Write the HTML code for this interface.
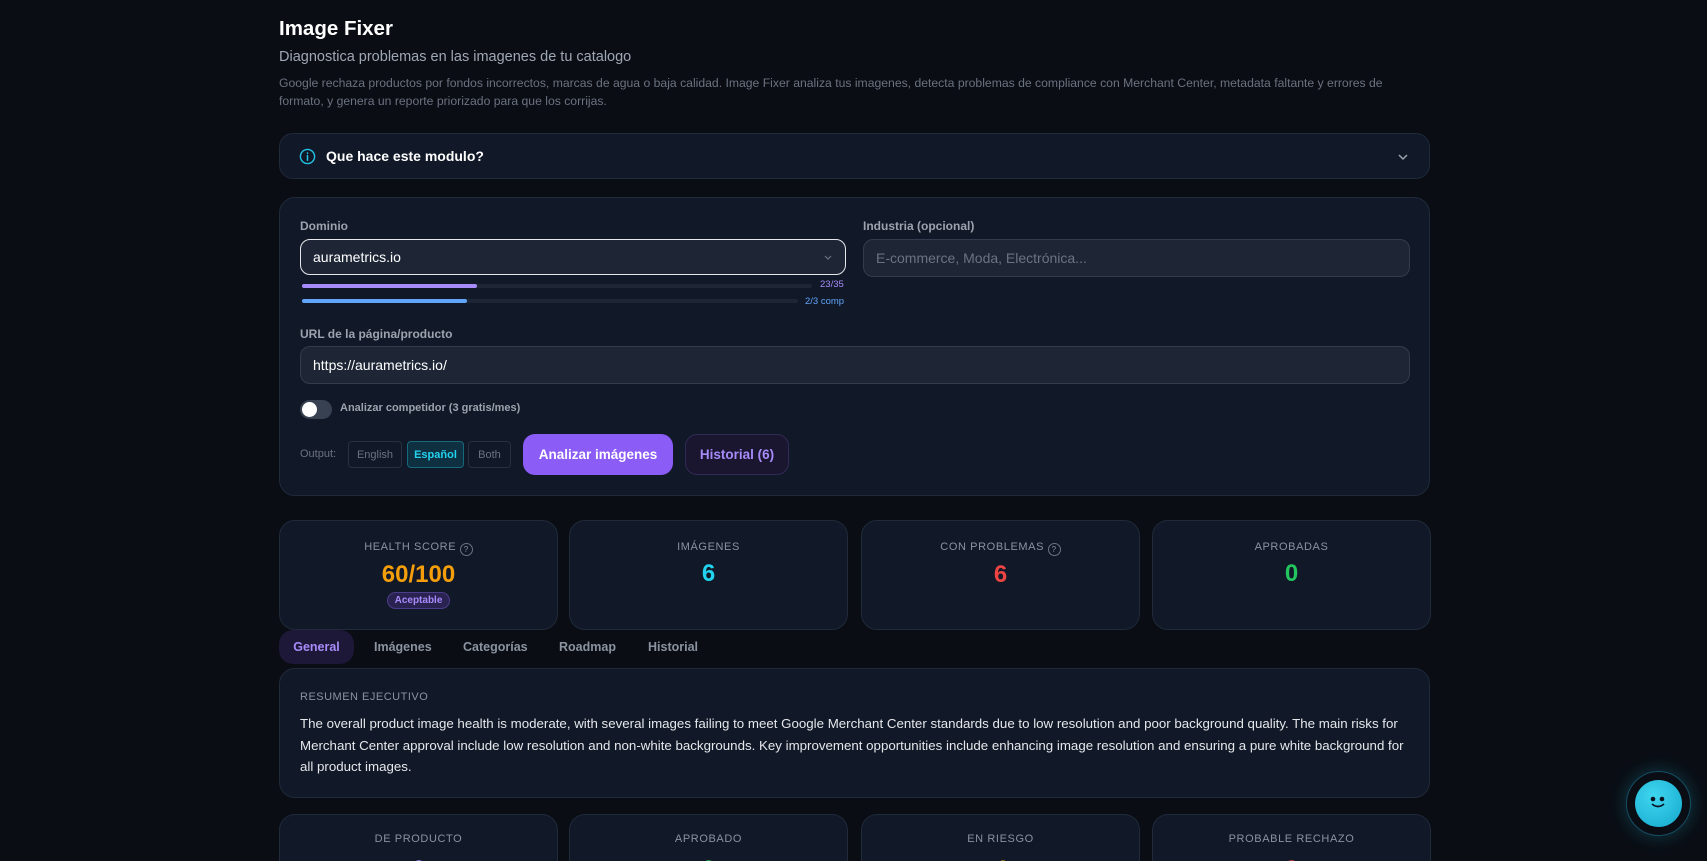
<!DOCTYPE html>
<html style="width:1707px;height:861px;overflow:hidden"><head><meta charset="utf-8"><style>
*{box-sizing:border-box;margin:0;padding:0}
body{width:1707px;height:861px;overflow:hidden;background:#0a0d14;font-family:"Liberation Sans",sans-serif;color:#e5e7eb;position:relative}
.a{position:absolute}
.card{position:absolute;background:#111827;border:1px solid #1f2a3a;border-radius:16px}
.lbl{font-size:12px;font-weight:bold;color:#9ca3af}
.inp{position:absolute;background:#1e2636;border:1px solid #323c4e;border-radius:10px;font-size:14px;padding-left:12px;display:flex;align-items:center}
.stat{position:absolute;top:520px;height:110px;width:279px;background:#111827;border:1px solid #1f2a3a;border-radius:16px;text-align:center;overflow:hidden}
.stat .t{font-size:11px;letter-spacing:.6px;color:#8b93a1;margin-top:20px}
.stat .v{font-size:24px;font-weight:bold;margin-top:7px}
.bs{height:47px;border-bottom:none;border-radius:16px 16px 0 0}
.ob{position:absolute;top:441px;height:27px;border:1px solid #263040;border-radius:4px;font-size:11px;color:#6b7280;display:flex;align-items:center;justify-content:center}
.tab{position:absolute;top:630px;height:34px;font-size:12.5px;font-weight:bold;color:#8b93a1;display:flex;align-items:center}
</style></head><body>
<div class="a" style="left:279px;top:17px;font-size:20.5px;font-weight:bold;color:#fff">Image Fixer</div>
<div class="a" style="left:279px;top:49px;font-size:14.5px;color:#a0a7b4">Diagnostica problemas en las imagenes de tu catalogo</div>
<div class="a" style="left:279px;top:74px;width:1125px;font-size:12.2px;line-height:18px;color:#6b7280">Google rechaza productos por fondos incorrectos, marcas de agua o baja calidad. Image Fixer analiza tus imagenes, detecta problemas de compliance con Merchant Center, metadata faltante y errores de formato, y genera un reporte priorizado para que los corrijas.</div>

<div class="card" style="left:279px;top:133px;width:1151px;height:46px;border-radius:14px">
<svg class="a" style="left:19px;top:14px" width="17" height="17" viewBox="0 0 18 18"><circle cx="9" cy="9" r="7.5" fill="none" stroke="#22c3e6" stroke-width="1.5"/><path d="M9 8v5M9 5.2v.3" stroke="#22c3e6" stroke-width="1.6" stroke-linecap="round"/></svg>
<div class="a" style="left:46px;top:14px;font-size:14px;font-weight:bold;color:#fff">Que hace este modulo?</div>
<svg class="a" style="left:1117px;top:18px" width="12" height="10" viewBox="0 0 12 10"><path d="M2 3l4 4 4-4" fill="none" stroke="#9ca3af" stroke-width="1.5"/></svg>
</div>

<div class="card" style="left:279px;top:197px;width:1151px;height:299px"></div>
<div class="a lbl" style="left:300px;top:219px">Dominio</div>
<div class="inp" style="left:300px;top:239px;width:546px;height:36px;border:1.5px solid #e5e7eb;color:#fff">aurametrics.io
<svg class="a" style="right:12px;top:14px" width="10" height="8" viewBox="0 0 10 8"><path d="M2 2l3 3 3-3" fill="none" stroke="#6b7280" stroke-width="1.2"/></svg></div>
<div class="a" style="left:302px;top:284px;width:510px;height:4px;background:#1e2636;border-radius:2px"><div style="width:175px;height:4px;background:#a78bfa;border-radius:2px"></div></div>
<div class="a" style="left:820px;top:279px;font-size:9.5px;color:#a78bfa">23/35</div>
<div class="a" style="left:302px;top:299px;width:496px;height:4px;background:#1e2636;border-radius:2px"><div style="width:165px;height:4px;background:#60a5fa;border-radius:2px"></div></div>
<div class="a" style="left:805px;top:296px;font-size:9.5px;color:#60a5fa">2/3 comp</div>
<div class="a lbl" style="left:863px;top:219px">Industria (opcional)</div>
<div class="inp" style="left:863px;top:239px;width:547px;height:38px;color:#6b7280">E-commerce, Moda, Electrónica...</div>
<div class="a lbl" style="left:300px;top:327px">URL de la página/producto</div>
<div class="inp" style="left:300px;top:346px;width:1110px;height:38px;color:#fff">https://aurametrics.io/</div>
<div class="a" style="left:300px;top:400px;width:32px;height:19px;background:#374151;border-radius:10px"><div style="position:absolute;left:2px;top:2px;width:15px;height:15px;background:#fff;border-radius:50%"></div></div>
<div class="a" style="left:340px;top:402px;font-size:11px;font-weight:bold;color:#9ca3af">Analizar competidor (3 gratis/mes)</div>
<div class="a" style="left:300px;top:448px;font-size:11px;color:#6b7280">Output:</div>
<div class="ob" style="left:348px;width:54px">English</div>
<div class="ob" style="left:407px;width:57px;background:#0e3040;border-color:#16697a;color:#22d3ee;font-weight:bold">Español</div>
<div class="ob" style="left:468px;width:43px">Both</div>
<div class="a" style="left:523px;top:434px;width:150px;height:41px;background:#8b5cf6;border-radius:12px;color:#fff;font-size:13.5px;font-weight:bold;display:flex;align-items:center;justify-content:center">Analizar imágenes</div>
<div class="a" style="left:685px;top:434px;width:104px;height:41px;background:#1a1630;border:1px solid #302a55;border-radius:12px;color:#a78bfa;font-size:13.5px;font-weight:bold;display:flex;align-items:center;justify-content:center">Historial (6)</div>

<div class="stat" style="left:279px"><div class="t">HEALTH SCORE <span style="display:inline-block;width:13px;height:13px;border:1px solid #6b7280;border-radius:50%;font-size:8px;line-height:11px;vertical-align:-2px">?</span></div><div class="v" style="color:#f59e0b;margin-top:5px">60/100</div><div style="display:inline-block;margin-top:3px;padding:2px 7px;font-size:10px;font-weight:bold;color:#a78bfa;background:#2a2250;border:1px solid #4c3d8a;border-radius:10px">Aceptable</div></div>
<div class="stat" style="left:569px"><div class="t">IMÁGENES</div><div class="v" style="color:#22d3ee">6</div></div>
<div class="stat" style="left:861px"><div class="t">CON PROBLEMAS <span style="display:inline-block;width:13px;height:13px;border:1px solid #6b7280;border-radius:50%;font-size:8px;line-height:11px;vertical-align:-2px">?</span></div><div class="v" style="color:#ef4444;margin-top:5px">6</div></div>
<div class="stat" style="left:1152px"><div class="t">APROBADAS</div><div class="v" style="color:#22c55e">0</div></div>

<div class="tab" style="left:279px;width:75px;justify-content:center;background:#1e1838;border-radius:14px;color:#a78bfa">General</div>
<div class="tab" style="left:374px">Imágenes</div>
<div class="tab" style="left:463px">Categorías</div>
<div class="tab" style="left:559px">Roadmap</div>
<div class="tab" style="left:648px">Historial</div>

<div class="card" style="left:279px;top:668px;width:1151px;height:130px"></div>
<div class="a" style="left:300px;top:691px;font-size:11px;letter-spacing:.5px;color:#8b93a1">RESUMEN EJECUTIVO</div>
<div class="a" style="left:300px;top:713px;width:1112px;font-size:13.3px;line-height:21.5px;color:#e5e7eb">The overall product image health is moderate, with several images failing to meet Google Merchant Center standards due to low resolution and poor background quality. The main risks for Merchant Center approval include low resolution and non-white backgrounds. Key improvement opportunities include enhancing image resolution and ensuring a pure white background for all product images.</div>

<div class="stat bs" style="left:279px;top:814px"><div class="t" style="margin-top:18px">DE PRODUCTO</div><div class="v" style="color:#a78bfa;margin-top:11px">6</div></div>
<div class="stat bs" style="left:569px;top:814px"><div class="t" style="margin-top:18px">APROBADO</div><div class="v" style="color:#22c55e;margin-top:11px">0</div></div>
<div class="stat bs" style="left:861px;top:814px"><div class="t" style="margin-top:18px">EN RIESGO</div><div class="v" style="color:#eab308;margin-top:11px">4</div></div>
<div class="stat bs" style="left:1152px;top:814px"><div class="t" style="margin-top:18px">PROBABLE RECHAZO</div><div class="v" style="color:#ef4444;margin-top:11px">2</div></div>

<div class="a" style="left:1626px;top:771px;width:65px;height:65px;border-radius:50%;border:1px solid #164e63;box-shadow:0 0 18px rgba(34,211,238,.25)"></div>
<div class="a" style="left:1635px;top:780px;width:47px;height:47px;border-radius:50%;background:radial-gradient(circle at 40% 35%,#3fd6f0,#14a8cc)"></div>
<svg class="a" style="left:1646px;top:794px" width="24" height="16" viewBox="0 0 24 16"><circle cx="7" cy="5" r="2.3" fill="#0b1220"/><circle cx="16" cy="5" r="2.3" fill="#0b1220"/><path d="M6 10q6 5 12 0" fill="none" stroke="#0b1220" stroke-width="1.6"/></svg>
</body></html>
